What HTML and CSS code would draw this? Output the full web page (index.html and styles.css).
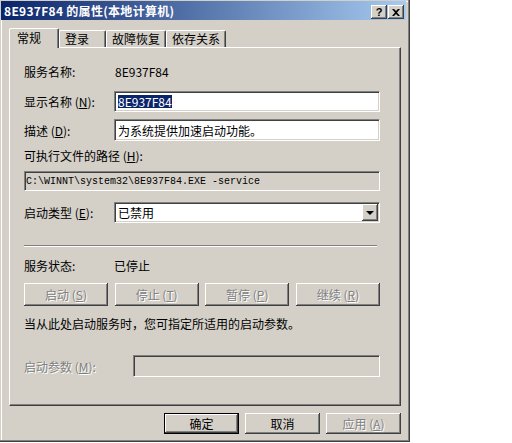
FILE: index.html
```html
<!DOCTYPE html>
<html lang="zh-CN">
<head>
    <meta charset="UTF-8">
    <title>8E937F84 的属性(本地计算机)</title>
    <link rel="stylesheet" href="styles.css">
</head>
<body>
    <div class="window">
        <div class="titlebar">
            <span class="title">8E937F84 的属性(本地计算机)</span>
            <div class="caption-btns">
                <span class="cap-btn">?</span>
                <span class="cap-btn">
                    <svg width="8" height="7" viewBox="0 0 8 7"><path d="M0 0h2l2 2 2-2h2L5 3.5 8 7H6L4 5 2 7H0l3-3.5z" fill="#000"/></svg>
                </span>
            </div>
        </div>

        <div class="client">
            <!-- 标签页 -->
            <div class="tabs">
                <div class="tab active">常规</div>
                <div class="tab tab-logon">登录</div>
                <div class="tab tab-wide">故障恢复</div>
                <div class="tab tab-wide">依存关系</div>
            </div>

            <div class="panel">
                <div class="row row-first">
                    <span class="label">服务名称:</span>
                    <span class="value">8E937F84</span>
                </div>
                <div class="row row-display">
                    <span class="label">显示名称 (<u>N</u>):</span>
                    <div class="field"><span class="selected">8E937F84</span></div>
                </div>
                <div class="row row-desc">
                    <span class="label">描述 (<u>D</u>):</span>
                    <div class="field">为系统提供加速启动功能。</div>
                </div>
                <div class="row row-path-label">可执行文件的路径 (<u>H</u>):</div>
                <div class="field path">C:\WINNT\system32\8E937F84.EXE -service</div>
                <div class="row row-type">
                    <span class="label">启动类型 (<u>E</u>):</span>
                    <div class="field select">
                        <span>已禁用</span>
                        <span class="drop-btn"><i class="arrow"></i></span>
                    </div>
                </div>

                <div class="sep"></div>

                <div class="row row-status">
                    <span class="label">服务状态:</span>
                    <span>已停止</span>
                </div>
                <div class="btn-row">
                    <span class="btn disabled">启动 (<u>S</u>)</span>
                    <span class="btn disabled">停止 (<u>T</u>)</span>
                    <span class="btn disabled">暂停 (<u>P</u>)</span>
                    <span class="btn disabled">继续 (<u>R</u>)</span>
                </div>
                <div class="row row-hint">当从此处启动服务时，您可指定所适用的启动参数。</div>
                <div class="row row-param">
                    <span class="label label-param disabled">启动参数 (<u>M</u>):</span>
                    <div class="field field-off"></div>
                </div>
            </div>

            <div class="footer">
                <span class="btn btn-foot default">确定</span>
                <span class="btn btn-foot">取消</span>
                <span class="btn btn-foot disabled">应用 (<u>A</u>)</span>
            </div>
        </div>
    </div>
</body>
</html>
```

FILE: styles.css
```css
body {
    margin: 0;
    background: #fff;
    color: #000;
    font-family: "Noto Sans CJK SC", "Liberation Sans", sans-serif;
    font-size: 12px;
}

u {
    text-decoration: underline;
    text-underline-offset: 1px;
}

.window {
    width: 410px;
    height: 442px;
    box-sizing: border-box;
    padding: 1px 4px 0 1px;
    background: #d4d0c8;
    box-shadow: inset -1px -1px #404040, inset -2px -2px #808080, inset 1px 1px #d4d0c8, inset 2px 2px #fff;
}

/* 标题栏 */
.titlebar {
    height: 19px;
    display: flex;
    align-items: center;
    justify-content: space-between;
    padding: 0 2px 0 3px;
    background: linear-gradient(to right, #0a246a, #a6caf0);
}

.title {
    color: #fff;
    font-weight: bold;
    font-size: 12px;
    line-height: 14px;
    letter-spacing: 0.3px;
}

.caption-btns {
    display: flex;
    gap: 1px;
    margin-top: 3px;
}

.cap-btn {
    width: 16px;
    height: 14px;
    box-sizing: border-box;
    display: flex;
    align-items: center;
    justify-content: center;
    background: #d4d0c8;
    font: bold 11px "Liberation Sans", sans-serif;
    box-shadow: inset -1px -1px #404040, inset 1px 1px #fff, inset -2px -2px #808080;
}

.client {
    padding: 8px 0 0 8px;
}

/* 标签页 */
.tabs {
    display: flex;
    align-items: flex-end;
    height: 20px;
    margin-bottom: -1px;
    position: relative;
    z-index: 1;
}

.tab {
    height: 17px;
    box-sizing: border-box;
    margin-bottom: 1px;
    padding: 0 0 0 5px;
    line-height: 16px;
    background: #d4d0c8;
    border-top: 1px solid #fff;
    border-left: 1px solid #fff;
    border-right: 1px solid #404040;
    border-radius: 2px 2px 0 0;
    box-shadow: inset -1px 0 #808080;
}

.tab.active {
    width: 50px;
    height: 20px;
    margin-bottom: 0;
    padding-left: 7px;
    line-height: 18px;
}

.tab-logon {
    width: 47px;
}

.tab-wide {
    width: 60px;
}

.panel {
    width: 392px;
    height: 359px;
    box-sizing: border-box;
    padding: 12px 0 0 14px;
    border-top: 1px solid #fff;
    border-left: 1px solid #fff;
    border-right: 1px solid #404040;
    border-bottom: 1px solid #404040;
    box-shadow: inset -1px -1px #808080;
}

.row {
    display: flex;
    align-items: center;
}

.label {
    width: 90px;
    flex: none;
}

.value {
    padding-left: 1px;
}

.row-first {
    height: 22px;
}

.row-display {
    height: 21px;
    margin-top: 9px;
}

.row-desc {
    height: 22px;
    margin-top: 7px;
}

.row-path-label {
    height: 20px;
    margin-top: 4px;
}

.row-type {
    height: 21px;
    margin-top: 11px;
}

.row-status {
    height: 20px;
    margin-top: 8px;
}

.row-hint {
    height: 20px;
    margin-top: 7px;
}

.row-param {
    height: 22px;
    margin-top: 22px;
}

.label-param {
    width: 109px;
}

/* 输入框 */
.field {
    width: 266px;
    height: 100%;
    box-sizing: border-box;
    display: flex;
    align-items: center;
    padding: 0 3px;
    background: #fff;
    border-top: 1px solid #808080;
    border-left: 1px solid #808080;
    border-right: 1px solid #fff;
    border-bottom: 1px solid #fff;
    box-shadow: inset 1px 1px #404040, inset -1px -1px #d4d0c8;
}

.selected {
    background: #0a246a;
    color: #fff;
    line-height: 13px;
}

.path {
    width: 356px;
    height: 20px;
    margin-top: 6px;
    padding-left: 1px;
    background: #d4d0c8;
    font-family: "Liberation Mono", monospace;
    font-size: 10px;
}

.select {
    justify-content: space-between;
    padding: 0 1px 0 3px;
}

.drop-btn {
    width: 16px;
    height: 17px;
    box-sizing: border-box;
    display: flex;
    align-items: center;
    justify-content: center;
    background: #d4d0c8;
    box-shadow: inset -1px -1px #404040, inset 1px 1px #fff, inset -2px -2px #808080;
}

.arrow {
    width: 0;
    height: 0;
    border-left: 4px solid transparent;
    border-right: 4px solid transparent;
    border-top: 4px solid #000;
}

.field-off {
    width: 247px;
    background: #d4d0c8;
}

.sep {
    width: 353px;
    height: 0;
    margin-top: 22px;
    border-top: 1px solid #808080;
    border-bottom: 1px solid #fff;
}

/* 按钮 */
.btn-row {
    width: 356px;
    height: 23px;
    margin-top: 8px;
    display: flex;
    justify-content: space-between;
}

.btn {
    width: 84px;
    height: 100%;
    box-sizing: border-box;
    display: flex;
    align-items: center;
    justify-content: center;
    background: #d4d0c8;
    box-shadow: inset -1px -1px #404040, inset 1px 1px #fff, inset -2px -2px #808080;
}

.disabled {
    color: #808080;
    text-shadow: 1px 1px #fff;
}

.footer {
    width: 392px;
    margin-top: 7px;
    display: flex;
    justify-content: flex-end;
    gap: 6px;
}

.btn-foot {
    width: 75px;
    height: 21px;
}

.default {
    border: 1px solid #000;
}
```
